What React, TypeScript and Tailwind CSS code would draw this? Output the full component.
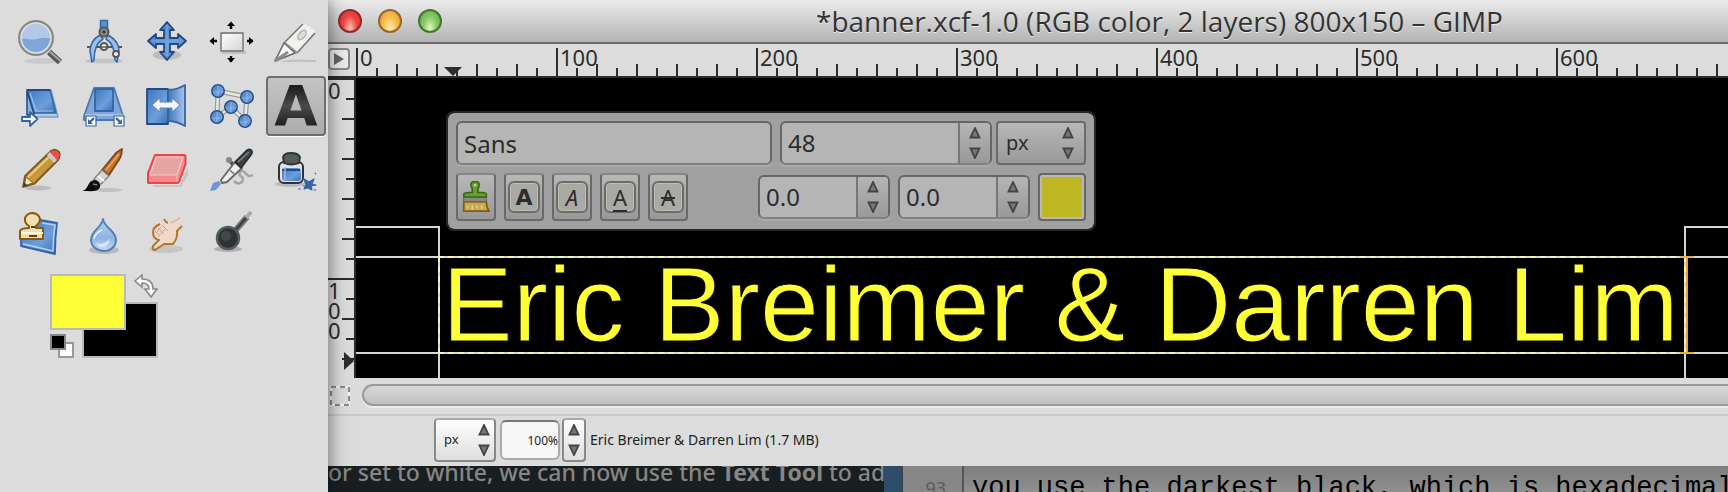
import type { ReactNode } from "react"

type Tool = { name: string; icon: ReactNode; active?: boolean }

const BLUE = "#3465a4"

function Icon({ children }: { children: ReactNode }) {
  return (
    <svg viewBox="0 0 44 44" className="size-11 overflow-visible" aria-hidden="true" strokeLinejoin="round">
      {children}
    </svg>
  )
}

function Node({ x, y }: { x: number; y: number }) {
  return (
    <g>
      <circle cx={x} cy={y} r="6.3" fill="url(#steel)" stroke="#204a87" strokeWidth="1.3" />
      <path d={`M${x - 5} ${y + 1}h10M${x} ${y - 5}v10`} stroke="#a9c8ec" strokeWidth="1.2" opacity="0.6" />
    </g>
  )
}

const tools: Tool[] = [
  {
    name: "Zoom",
    icon: (
      <Icon>
        <ellipse cx="24" cy="41" rx="18" ry="3" fill="#000" opacity="0.08" />
        <path d="M31 32l11 10" stroke="#555753" strokeWidth="6" />
        <path d="M31.500 31.500l11 9.500" stroke="#a5a7a2" strokeWidth="2" />
        <circle cx="18" cy="18" r="16.500" fill="#b3c9e8" stroke="#888a85" strokeWidth="3" />
        <path d="M4 19c4-2 9 2 15 0s9-1 13-1c0 8-6 14-14 14S4 26 4 19z" fill="#7fa6d8" />
        <circle cx="18" cy="18" r="15" fill="none" stroke="#dfe3e3" strokeWidth="1.500" />
      </Icon>
    ),
  },
  {
    name: "Measure",
    icon: (
      <Icon>
        <ellipse cx="22" cy="41" rx="19" ry="2.500" fill="#000" opacity="0.1" />
        <path d="M5 27h35" stroke="#555753" strokeWidth="2" />
        <path d="M18 15c-7 4-10 10-10 16l2 11 2-2c0-9 2-17 9-21z" fill="#9dbfe6" stroke={BLUE} strokeWidth="1.500" />
        <path d="M26 15c7 4 11 10 11 16l-2 11-2-2c0-9-2-17-9-21z" fill="#9dbfe6" stroke={BLUE} strokeWidth="1.500" />
        <rect x="18.500" y="0.500" width="7" height="8" fill="#5d8fce" stroke={BLUE} strokeWidth="1.500" />
        <circle cx="22" cy="12" r="4.500" fill="#888a85" stroke="#555753" strokeWidth="2" />
        <circle cx="22" cy="12" r="1.500" fill="#333" />
        <circle cx="22" cy="26.500" r="3.500" fill="#eee" stroke="#555753" strokeWidth="2" />
        <path d="M19 27h6" stroke="#555753" strokeWidth="1.500" />
        <circle cx="34" cy="34" r="3" fill="#eee" stroke="#555753" strokeWidth="1.800" />
      </Icon>
    ),
  },
  {
    name: "Move",
    icon: (
      <Icon>
        <ellipse cx="21" cy="35" rx="14" ry="5" fill="#000" opacity="0.14" />
        <path
          d="M21 2l7 8h-4v8h8v-4l8 7-8 7v-4h-8v8h4l-7 8-7-8h4v-8h-8v4l-8-7 8-7v4h8v-8h-4z"
          fill="url(#steel)"
          stroke="#204a87"
          strokeWidth="1.800"
        />
        <path d="M21 5v31M5 21h31" stroke="#7ba6dc" strokeWidth="1.200" />
      </Icon>
    ),
  },
  {
    name: "Align",
    icon: (
      <Icon>
        <rect x="12" y="31" width="24" height="3" fill="#000" opacity="0.12" />
        <rect x="11" y="13" width="22" height="18" fill="url(#paper)" stroke="#888a85" strokeWidth="1.800" />
        <path d="M21 3v6M21 36v6M1 21h6M37 21h6" stroke="#000" strokeWidth="2.500" />
        <path d="M17 6l4-4.500L25 6zM17 38l4 4.500 4-4.500zM4 17l-4.500 4L4 25zM39 17l4.500 4-4.500 4z" fill="#000" />
      </Icon>
    ),
  },
  {
    name: "Crop",
    icon: (
      <Icon>
        <path d="M6 42c12-4 24-2 36-2v2z" fill="#000" opacity="0.12" />
        <path d="M10 23L29 3l1 2 2-1 1 2 3 0 1 3 3 0 1 4-18 20-11-3z" fill="#f1f1ef" />
        <path d="M10 23L29 4M23 33l18-20" stroke="#777a74" strokeWidth="1.600" />
        <path d="M10 23l11 10L1 41z" fill="#fff" stroke="#666862" strokeWidth="1.600" />
        <path d="M1 41l13-9" stroke="#8a8c86" strokeWidth="3" />
        <ellipse cx="28" cy="15" rx="3" ry="5.500" transform="rotate(40 28 15)" fill="#ddd" stroke="#b3b5b0" strokeWidth="1.500" />
        <path d="M11 23l12 10" stroke="#888a85" strokeWidth="2" />
      </Icon>
    ),
  },
  {
    name: "Shear",
    icon: (
      <Icon>
        <path d="M9 6h24l7 27H10z" fill="#b4cae6" stroke="#7d9cc4" strokeWidth="1.500" />
        <path d="M9 6h23l6 23H16z" fill="url(#steel)" stroke={BLUE} strokeWidth="1.500" />
        <path d="M9 6h23" stroke="#204a87" strokeWidth="2" />
        <path d="M9 7l7 23-7 1z" fill="#8db1df" stroke="#204a87" strokeWidth="1.500" />
        <path d="M12 9l6 18h17" fill="none" stroke="#9dbfe8" strokeWidth="1.200" />
        <path d="M4 33h8v-5l7.500 7-7.500 7v-5H4z" fill="#fff" stroke={BLUE} strokeWidth="1.800" />
      </Icon>
    ),
  },
  {
    name: "Perspective",
    icon: (
      <Icon>
        <path d="M12 4h20l9 28v4H2v-4z" fill="#7fa7da" stroke="#4c79b3" strokeWidth="1.800" />
        <path d="M13 5h18v22H13z" fill="url(#steel)" stroke={BLUE} strokeWidth="1.800" />
        <path d="M3 31h38" stroke="#b6cdea" strokeWidth="1.500" />
        <rect x="4" y="32" width="10" height="10" fill="#fff" stroke={BLUE} strokeWidth="1.200" />
        <rect x="32" y="32" width="10" height="10" fill="#fff" stroke={BLUE} strokeWidth="1.200" />
        <path d="M12 34l-4 4M34 34l4 4" stroke={BLUE} strokeWidth="2.400" />
        <path d="M6 35v5h5zM40 35v5h-5z" fill={BLUE} />
      </Icon>
    ),
  },
  {
    name: "Flip",
    icon: (
      <Icon>
        <path d="M1 5h21v35H1z" fill="url(#steel)" stroke="#204a87" strokeWidth="1.800" />
        <path d="M22 6c7 0 12-2 17-5v41c-5-3-10-5-17-5z" fill="url(#flap)" stroke={BLUE} strokeWidth="1.800" />
        <path d="M6 21l8-7v4h12v-4l8 7-8 7v-4H14v4z" fill="#f4f6f9" stroke="#5d88bf" strokeWidth="1" />
      </Icon>
    ),
  },
  {
    name: "Cage Transform",
    icon: (
      <Icon>
        <path d="M8 7l29 6-2 24M8 7L7 33l14-10 14 14" fill="none" stroke="#9a9c96" strokeWidth="5" />
        <path d="M8 7l29 6-2 24M8 7L7 33l14-10 14 14" fill="none" stroke="#e8e8e5" strokeWidth="2.500" />
        <Node x={8} y={7} />
        <Node x={37} y={13} />
        <Node x={21} y={23} />
        <Node x={7} y={33} />
        <Node x={35} y={37} />
      </Icon>
    ),
  },
  {
    name: "Text",
    active: true,
    icon: (
      <span className="bg-linear-to-b from-[#0c0c0c] via-[#4a4a4a] to-[#111] bg-clip-text font-['DejaVu_Sans'] text-[56px] leading-none font-bold text-transparent">
        A
      </span>
    ),
  },
  {
    name: "Pencil",
    icon: (
      <Icon>
        <ellipse cx="20" cy="40" rx="13" ry="2.500" fill="#000" opacity="0.15" />
        <path d="M5 39l2-11L33 3q4-3 8 1 2 3-1 8L16 36z" fill="#c9963c" stroke="#7a5a1e" strokeWidth="1.800" />
        <path d="M10 29L32 8" stroke="#ecca80" strokeWidth="2" />
        <path d="M29 7l7 8 3-3-7-8z" fill="#c9cbc7" />
        <path d="M32 4l7 8q4-4 1-7.500T32 4z" fill="#ef4a50" />
        <path d="M6 38l2-9 7 6z" fill="#f5e4b8" stroke="#7a5a1e" strokeWidth="1" />
        <path d="M5 39l1-5 4 4z" fill="#4d4023" />
      </Icon>
    ),
  },
  {
    name: "Paintbrush",
    icon: (
      <Icon>
        <ellipse cx="26" cy="42" rx="14" ry="2" fill="#000" opacity="0.12" />
        <path d="M20 22L34 5q4-3 6-4 0 5-2 9L27 27z" fill="#c8752b" stroke="#7c4515" strokeWidth="1.800" />
        <path d="M24 22L37 6" stroke="#eaa567" strokeWidth="1.500" />
        <path d="M20 22l7 6-9 9-6-6z" fill="#d3d5d1" stroke="#7d7f7a" strokeWidth="1.200" />
        <path d="M16 28l6 5" stroke="#fff" strokeWidth="2" />
        <path d="M0 43c7-1 5-10 12-11 5 0 8 5 5 9-3 3-9 2-17 2z" fill="#0b0b0b" />
        <path d="M11 36l4 1" stroke="#888" strokeWidth="1.500" />
      </Icon>
    ),
  },
  {
    name: "Eraser",
    icon: (
      <Icon>
        <path d="M6 37l28 0 8-18v8l-7 12H8z" fill="#000" opacity="0.1" />
        <path d="M9 7h29q2 0 1.500 3v6L33 34q-1 1-2 1H3q-1.500 0-1-2v-8z" fill="#f58a8d" stroke="#ee4148" strokeWidth="2" />
        <path d="M10 9h27l-6 18H4z" fill="#e5a5a3" stroke="#f8c8c8" strokeWidth="1.200" />
        <path d="M31 28v6" stroke="#ffb9bb" strokeWidth="1.200" />
      </Icon>
    ),
  },
  {
    name: "Airbrush",
    icon: (
      <Icon>
        <path d="M0 43l3-8 6-2 2 3-5 6z" fill="#6f97cf" />
        <path d="M24 33c6 6 11-1 8-4-4-2-3-7 1-6 5 3 4 7 10 4" fill="none" stroke="#a3a5a0" strokeWidth="2.500" />
        <path d="M19 12l7 8" stroke="#555753" strokeWidth="3.500" />
        <circle cx="19" cy="12" r="3" fill="#888a85" />
        <path d="M11 32L25 14l7 6-15 14-5 1z" fill="#eee" stroke="#666862" strokeWidth="1.800" />
        <path d="M25 14L37 2q3-2 5 1 1 2-1 4L31 20z" fill="#3a4043" stroke="#262b2d" strokeWidth="1.500" />
        <path d="M28 14L39 4" stroke="#818688" strokeWidth="1.500" />
        <path d="M20 22l5 5" stroke="#777" strokeWidth="1.500" />
      </Icon>
    ),
  },
  {
    name: "Ink",
    icon: (
      <Icon>
        <ellipse cx="16" cy="36" rx="15" ry="3" fill="#000" opacity="0.15" />
        <rect x="5" y="14" width="24" height="21" rx="5" fill="#e2e4e2" stroke="#2e3436" strokeWidth="2" />
        <rect x="8" y="20" width="19" height="13" rx="3" fill="url(#steel)" />
        <path d="M8 22h18" stroke="#1f4a85" strokeWidth="2" />
        <path d="M11 19v13" stroke="#9cbce4" strokeWidth="1.500" />
        <path d="M10 15l-1-6q1-4 8-4t9 4l-1 6q-8 3-15 0z" fill="#555a5c" stroke="#2e3436" strokeWidth="1.800" />
        <path d="M30 31l5 3 5-3-2 5 4 1-5 1 1 4-4-2-4 1 2-4zM24 41h3M29 38h2M41 26l1-1M40 42l2 0" fill={BLUE} stroke={BLUE} strokeWidth="1.200" />
      </Icon>
    ),
  },
  {
    name: "Clone",
    icon: (
      <Icon>
        <path d="M22 8l17 3q-2 15-2 31L3 34V23z" fill="url(#steel)" stroke={BLUE} strokeWidth="1.800" />
        <path d="M24 11l13 2q-2 13-2 26L5 32" fill="none" stroke="#b7cfee" strokeWidth="1.500" />
        <path d="M11 14q-5-3-4-8 2-5 8-5 6 1 7 6 0 4-4 7v2h7v11H2V19q1-3 9-3z" fill="#f0dfb4" stroke="#8f5902" strokeWidth="2" />
        <path d="M3 21h22" stroke="#fff8e2" strokeWidth="2" />
        <path d="M11 24h8M13 15h4" stroke="#5d430f" strokeWidth="2" />
      </Icon>
    ),
  },
  {
    name: "Blur",
    icon: (
      <Icon>
        <ellipse cx="22" cy="38" rx="15" ry="4" fill="#000" opacity="0.16" />
        <path d="M21 7c1 9 13 11 13 21 0 6-5 11-12 11S9 34 9 28c0-10 11-12 12-21z" fill="url(#drop)" stroke="#4f7fbd" strokeWidth="2" />
        <path d="M14 31q6 3 14-4-2 9-9 8-4-1-5-4z" fill="#fff" opacity="0.55" />
        <path d="M12 27q1-6 8-9" fill="none" stroke="#eaf2fb" strokeWidth="1.500" />
      </Icon>
    ),
  },
  {
    name: "Smudge",
    icon: (
      <Icon>
        <ellipse cx="20" cy="37" rx="17" ry="4" fill="#000" opacity="0.1" />
        <path d="M18 7l7 4 9-6 2 2-5 8q2 10-5 16h-8l-8 5q-3 0-3-3l5-5q-5-3-5-8 2-9 11-13z" fill="#f2d8c9" />
        <path
          d="M18 7q1 3 4 4M14 12q-7 3-7 8 0 7 6 8l-6 6q-1 4 2 4l9-6h9q5-6 4-13l5-5"
          fill="none"
          stroke="#b5762a"
          strokeWidth="2"
        />
        <path d="M25 11l9-5" stroke="#d9b6a4" strokeWidth="1.500" />
        <path d="M9 19l4 4M12 16l6 6M16 13l6 6M12 25l7-8M11 20l4-5" stroke="#c9a48c" strokeWidth="1" />
      </Icon>
    ),
  },
  {
    name: "Dodge / Burn",
    icon: (
      <Icon>
        <ellipse cx="18" cy="37" rx="14" ry="3" fill="#000" opacity="0.2" />
        <path d="M24 20L37 5" stroke="#707472" strokeWidth="6" />
        <path d="M36 6l5-6" stroke="#a9aba9" strokeWidth="4" />
        <path d="M23 21L36 6" stroke="#3a3f40" strokeWidth="2.500" />
        <circle cx="18" cy="26" r="11" fill="#2e3436" stroke="#555a5a" strokeWidth="2.500" />
        <circle cx="16" cy="24" r="5" fill="#42484a" />
      </Icon>
    ),
  },
]

const marks = [0, 100, 200, 300, 400, 500, 600]
const cells = [0, 1, 2, 3, 4, 5, 6, 7, 8, 9]

function Gradients() {
  return (
    <svg className="absolute size-0" aria-hidden="true">
      <defs>
        <linearGradient id="steel" x1="0" y1="0" x2="1" y2="1">
          <stop offset="0" stopColor="#3f76bb" />
          <stop offset="0.6" stopColor="#6e9fdb" />
          <stop offset="1" stopColor="#3a6fb3" />
        </linearGradient>
        <linearGradient id="flap" x1="0" y1="0" x2="1" y2="0">
          <stop offset="0" stopColor="#3f76bb" />
          <stop offset="1" stopColor="#a8c6ec" />
        </linearGradient>
        <linearGradient id="paper" x1="0" y1="0" x2="1" y2="1">
          <stop offset="0" stopColor="#ffffff" />
          <stop offset="1" stopColor="#d4d5d3" />
        </linearGradient>
        <linearGradient id="drop" x1="0" y1="0" x2="0" y2="1">
          <stop offset="0" stopColor="#b9d2ee" />
          <stop offset="0.6" stopColor="#8db4e2" />
          <stop offset="1" stopColor="#c9def5" />
        </linearGradient>
      </defs>
    </svg>
  )
}

function Toolbox() {
  return (
    <aside className="relative z-10 w-[328px] shrink-0 bg-[#dcdcdc] pt-2.5 pl-2 shadow-[0_0_18px_rgba(0,0,0,0.55)]">
      <Gradients />
      <div className="grid grid-cols-5">
        {tools.map((tool) => (
          <button
            key={tool.name}
            type="button"
            aria-label={tool.name}
            className={
              tool.active
                ? "m-0.5 flex h-15 items-center justify-center rounded-sm border-2 border-[#6e6e6e] bg-linear-to-b from-[#c4c4c4] to-[#acacac] shadow-[0_1px_0_#fff]"
                : "flex size-16 items-center justify-center"
            }
          >
            {tool.icon}
          </button>
        ))}
      </div>
      <div className="relative mt-2 ml-[42px] h-21 w-27">
        <button type="button" aria-label="Background color" className="absolute right-0 bottom-0 h-14 w-19 border-2 border-[#b9b9b9] bg-black" />
        <button type="button" aria-label="Foreground color" className="absolute top-0 left-0 h-14 w-19 border-2 border-[#b9b9b9] bg-[#ffff38]" />
        <button type="button" aria-label="Swap colors" className="absolute top-0 right-0">
          <svg viewBox="0 0 24 24" className="size-6" fill="#fff" stroke="#888a85" strokeWidth="1.600">
            <path d="M1 7l7-6v4q11 0 11 10h4l-6 8-6-8h4q0-6-7-6v4z" />
          </svg>
        </button>
        <button type="button" aria-label="Reset colors" className="absolute bottom-0 left-0 size-6">
          <span className="absolute right-0 bottom-0 size-4 border-2 border-[#999] bg-white" />
          <span className="absolute top-0 left-0 size-4 border-2 border-[#888] bg-black" />
        </button>
      </div>
    </aside>
  )
}

function Triangle({ down }: { down?: boolean }) {
  return (
    <svg viewBox="0 0 12 12" className="size-3" aria-hidden="true">
      <path d={down ? "M1.500 1.500h9L6 11z" : "M1.500 10.500h9L6 1z"} fill="#777" stroke="#444" strokeWidth="1.800" />
    </svg>
  )
}

function Arrows() {
  return (
    <span className="flex flex-col items-center gap-2">
      <Triangle />
      <Triangle down />
    </span>
  )
}

function SpinBox({ label, value, className }: { label: string; value: string; className: string }) {
  return (
    <div className={`flex h-11 overflow-hidden rounded-md border-2 border-[#666] border-b-[#808080] bg-[#b5b5b5] shadow-[0_2px_0_#acacac] ${className}`}>
      <input aria-label={label} defaultValue={value} className="w-0 min-w-0 flex-1 px-1.5 text-2xl outline-none" />
      <button type="button" aria-label={`Step ${label}`} className="flex w-8 items-center justify-center border-l-2 border-[#777] bg-linear-to-b from-[#b5b5b5] to-[#999]">
        <Arrows />
      </button>
    </div>
  )
}

const styles = [
  { name: "Bold", className: "font-['DejaVu_Sans'] font-bold" },
  { name: "Italic", className: "italic" },
  { name: "Underline", className: "underline underline-offset-4" },
  { name: "Strikethrough", className: "line-through" },
]

const toggle =
  "flex h-12 w-10 items-center justify-center rounded-sm border-2 border-[#6a6a6a] border-t-[#858585] bg-linear-to-b from-[#b8b8b8] to-[#989898]"

function TextOptions() {
  return (
    <div className="absolute top-[35px] left-[92px] flex w-[646px] flex-col gap-2 rounded-md bg-[#a0a0a0] px-2 pt-2 pb-2 text-[22px] text-[#2c2c2c] outline-2 outline-[#262626]">
      <div className="flex">
        <input
          aria-label="Font"
          defaultValue="Sans"
          className="h-11 w-0 flex-1 rounded-md border-2 border-[#666] border-b-[#808080] bg-[#b5b5b5] px-1.5 text-2xl shadow-[0_2px_0_#acacac] outline-none"
        />
        <SpinBox label="Font size" value="48" className="ml-2 w-[212px]" />
        <div className="relative ml-1 w-[90px]">
          <select
            aria-label="Font size unit"
            className="h-11 w-full appearance-none rounded-sm border-2 border-[#6a6a6a] bg-linear-to-b from-[#b8b8b8] to-[#999] pl-2 text-xl outline-none"
          >
            <option>px</option>
          </select>
          <span className="pointer-events-none absolute top-1.5 right-3">
            <Arrows />
          </span>
        </div>
      </div>
      <div className="flex items-center gap-2">
        <button type="button" aria-label="Clear style" className={toggle}>
          <svg viewBox="0 0 28 34" className="h-8 w-7" aria-hidden="true">
            <path d="M1 22h24q0 6 3 10H1z" fill="#c3ac55" stroke="#8f5902" strokeWidth="1.800" />
            <path d="M5 29v-3M10 30v-4M15 29v-3M20 30v-4" stroke="#e6d58c" strokeWidth="1.500" />
            <rect x="1" y="17" width="24" height="5" fill="#888a85" stroke="#5d5f5b" />
            <path d="M1 17v-3q1-2 9-2V8q-4-7 3-7.500Q20 1 16 8v4q9 0 9 2v3z" fill="#6d9a3a" stroke="#3c6b0c" strokeWidth="1.800" />
            <circle cx="13" cy="4.500" r="1.500" fill="#b6d391" />
          </svg>
        </button>
        {styles.map((style) => (
          <button key={style.name} type="button" aria-label={style.name} className={toggle}>
            <span className={`flex size-8 items-center justify-center rounded-md border-2 border-[#6b6c66] bg-[#a9aaa6] text-[22px] inset-ring inset-ring-[#bdbdb8] ${style.className}`}>A</span>
          </button>
        ))}
        <SpinBox label="Baseline" value="0.0" className="ml-auto w-[132px]" />
        <SpinBox label="Kerning" value="0.0" className="w-[132px]" />
        <button type="button" aria-label="Text color" className="h-12 w-12 rounded-sm border-2 border-[#666] bg-[#bdb724] inset-ring-2 inset-ring-[#b8b8b8]" />
      </div>
    </div>
  )
}

function TopRuler() {
  return (
    <div className="relative flex h-[34px] min-w-0 flex-1 items-end overflow-hidden border-b-2 border-[#2c2c2c]">
      {marks.map((mark) => (
        <div key={mark} className="relative flex shrink-0 items-end">
          <span className="absolute bottom-1.5 left-1 text-[22px] leading-[26px]">{mark}</span>
          {cells.map((i) => (
            <i key={i} className={`w-5 border-l-2 border-[#2c2c2c] ${i === 0 ? "h-7" : i % 2 ? "h-2" : "h-3"}`} />
          ))}
        </div>
      ))}
      <svg viewBox="0 0 18 9" className="absolute bottom-0 left-22 h-[9px] w-[18px]" aria-hidden="true">
        <path d="M0 0h18L9 9z" fill="#2c2c2c" />
      </svg>
    </div>
  )
}

function SideRuler() {
  return (
    <div className="relative h-[300px] w-7 shrink-0 overflow-hidden border-r-2 border-[#2c2c2c] text-[22px] leading-5">
      {["0", "100"].map((mark) => (
        <div key={mark} className="relative flex flex-col items-end">
          <span className="absolute top-0.5 left-0 w-3 break-all">{mark}</span>
          {cells.map((i) => (
            <i key={i} className={`h-5 shrink-0 border-t-2 border-[#2c2c2c] ${i === 0 ? "w-7" : i % 2 ? "w-2" : "w-3"}`} />
          ))}
        </div>
      ))}
      <svg viewBox="0 0 10 18" className="absolute right-0 bottom-2 h-[18px] w-2.5" aria-hidden="true">
        <path d="M0 0v18l10-9z" fill="#2c2c2c" />
      </svg>
    </div>
  )
}

function Canvas() {
  return (
    <main className="relative h-[300px] min-w-0 flex-1 overflow-hidden bg-black">
      {/* thin black outline slims the strokes a little */}
      <p className="absolute top-[166px] left-[86px] font-['Liberation_Sans'] text-[106px] leading-[120px] whitespace-nowrap text-[#ffff38] [-webkit-text-stroke:1px_#000]">
        Eric Breimer &amp; Darren Lim
      </p>
      {/* neighbouring layer edges */}
      <div className="absolute top-[148px] left-0 h-[152px] w-21 border-t-2 border-r-2 border-[#d6d6d6]" />
      <div className="absolute top-[148px] right-0 left-[1328px] h-[152px] border-t-2 border-l-2 border-[#d6d6d6]" />
      {/* text layer frame */}
      <div className="absolute top-[178px] right-0 left-0 h-[98px] border-y-2 border-[#d6d6d6]" />
      <div className="absolute top-[178px] left-[82px] h-[98px] w-[1248px] border-2 border-dashed border-[#f4f4b8]" />
      <div className="absolute top-[178px] left-[1324px] flex h-[98px] w-3.5 justify-center border-y-2 border-[#e5b045]">
        <span className="w-0.5 bg-[#e5a52c]" />
      </div>
      <TextOptions />
    </main>
  )
}

function ImageWindow() {
  return (
    <section className="bg-[#dcdcdc] text-[#2c2c2c]">
      <header className="flex h-11 items-center gap-4 border-b-2 border-[#6b6b6b] bg-linear-to-b from-[#ececec] to-[#b4b4b4] pl-2.5">
        <button type="button" aria-label="Close" className="size-6 rounded-full border-2 border-[#8e2a2a] bg-radial-[at_50%_85%] from-[#ffc4c0] via-[#f0453f] to-[#d8383a]" />
        <button type="button" aria-label="Minimize" className="size-6 rounded-full border-2 border-[#99652a] bg-radial-[at_50%_85%] from-[#fff0b0] via-[#f6bb4a] to-[#e09a3c]" />
        <button type="button" aria-label="Zoom window" className="size-6 rounded-full border-2 border-[#44762f] bg-radial-[at_50%_85%] from-[#dcf7c4] via-[#85c765] to-[#5da545]" />
        <h1 className="ml-[358px] font-['Open_Sans'] text-[28px] leading-10 whitespace-nowrap text-[#333] text-shadow-[0_1px_0_#eee]">
          *banner.xcf-1.0 (RGB color, 2 layers) 800x150 – GIMP
        </h1>
      </header>
      <div className="flex">
        <div className="w-7 shrink-0 border-b-2 border-[#2c2c2c] pt-1">
          <button type="button" aria-label="Image menu" className="flex size-[22px] items-center justify-center rounded-sm border-2 border-[#888] bg-[#ececec]">
            <svg viewBox="0 0 10 12" className="h-3 w-2.5" aria-hidden="true">
              <path d="M0 0v12l10-6z" fill="#666" />
            </svg>
          </button>
        </div>
        <TopRuler />
      </div>
      <div className="flex">
        <SideRuler />
        <Canvas />
      </div>
      <div className="flex h-9 items-start gap-3 overflow-hidden pt-1.5 pl-0.5">
        <button type="button" aria-label="Quick mask" className="mt-0.5 shrink-0">
          <svg viewBox="0 0 20 20" className="size-5" fill="none" strokeWidth="2">
            <path d="M1 1h18v18H1z" stroke="#f4f4f4" />
            <path d="M1 1h18v18H1z" stroke="#888a85" strokeDasharray="5 4" />
          </svg>
        </button>
        <div className="h-[22px] flex-1 rounded-l-full border-2 border-r-0 border-[#999] bg-linear-to-b from-[#d8d8d8] to-[#bfbfbf] shadow-[0_2px_0_#ececec]" />
      </div>
      <footer className="flex h-13 items-center border-t-2 border-[#c9c9c9] pb-0.5 pl-[106px] text-[#222]">
        <div className="relative w-[62px]">
          <select aria-label="Unit" className="h-11 w-full appearance-none rounded-sm border-2 border-[#888] border-t-[#aaa] bg-linear-to-b from-white to-[#dedede] pl-2 text-[13px] outline-none">
            <option>px</option>
          </select>
          <span className="pointer-events-none absolute top-1.5 right-1.5">
            <Arrows />
          </span>
        </div>
        <input
          aria-label="Zoom level"
          defaultValue="100%"
          className="ml-1 h-10 w-15 rounded-md border-2 border-[#aaa] border-t-[#777] bg-[#f7f7f7] text-right text-xs outline-none"
        />
        <button type="button" aria-label="Change zoom" className="ml-0.5 flex h-11 w-6 items-center justify-center rounded-sm border-2 border-[#888] border-t-[#aaa] bg-linear-to-b from-white to-[#dedede]">
          <Arrows />
        </button>
        <p className="ml-1 text-sm whitespace-nowrap">Eric Breimer &amp; Darren Lim (1.7 MB)</p>
      </footer>
    </section>
  )
}

// windows that peek out under the image window
function Behind() {
  return (
    <div className="flex min-h-[26px] flex-1 basis-0 overflow-hidden">
      <p className="h-[26px] w-[556px] shrink-0 overflow-hidden bg-[#191e20] text-[23px] leading-3 font-medium whitespace-nowrap text-[#868686]">
        or set to white, we can now use the <b>Text Tool</b> to add
      </p>
      <div className="w-[19px] shrink-0 border-r-2 border-[#444] bg-[#2e4d6b]" />
      <div className="h-[26px] w-[61px] shrink-0 border-r-2 border-[#555] bg-[#868686] pt-2 pr-4 text-right text-lg text-[#5c5c5c]">93</div>
      <pre className="h-[26px] min-w-0 flex-1 overflow-hidden bg-linear-to-b from-[#7d7d7d] to-[#909090] pt-2 pl-2 font-['Liberation_Mono'] text-[27px] leading-7 text-black">
        you use the darkest black, which is hexadecimal
      </pre>
    </div>
  )
}

export default function App() {
  return (
    <div className="flex h-screen overflow-hidden bg-[#dcdcdc] font-['Noto_Sans',sans-serif]">
      <Toolbox />
      <div className="flex min-w-0 flex-1 flex-col">
        <ImageWindow />
        <Behind />
      </div>
    </div>
  )
}
